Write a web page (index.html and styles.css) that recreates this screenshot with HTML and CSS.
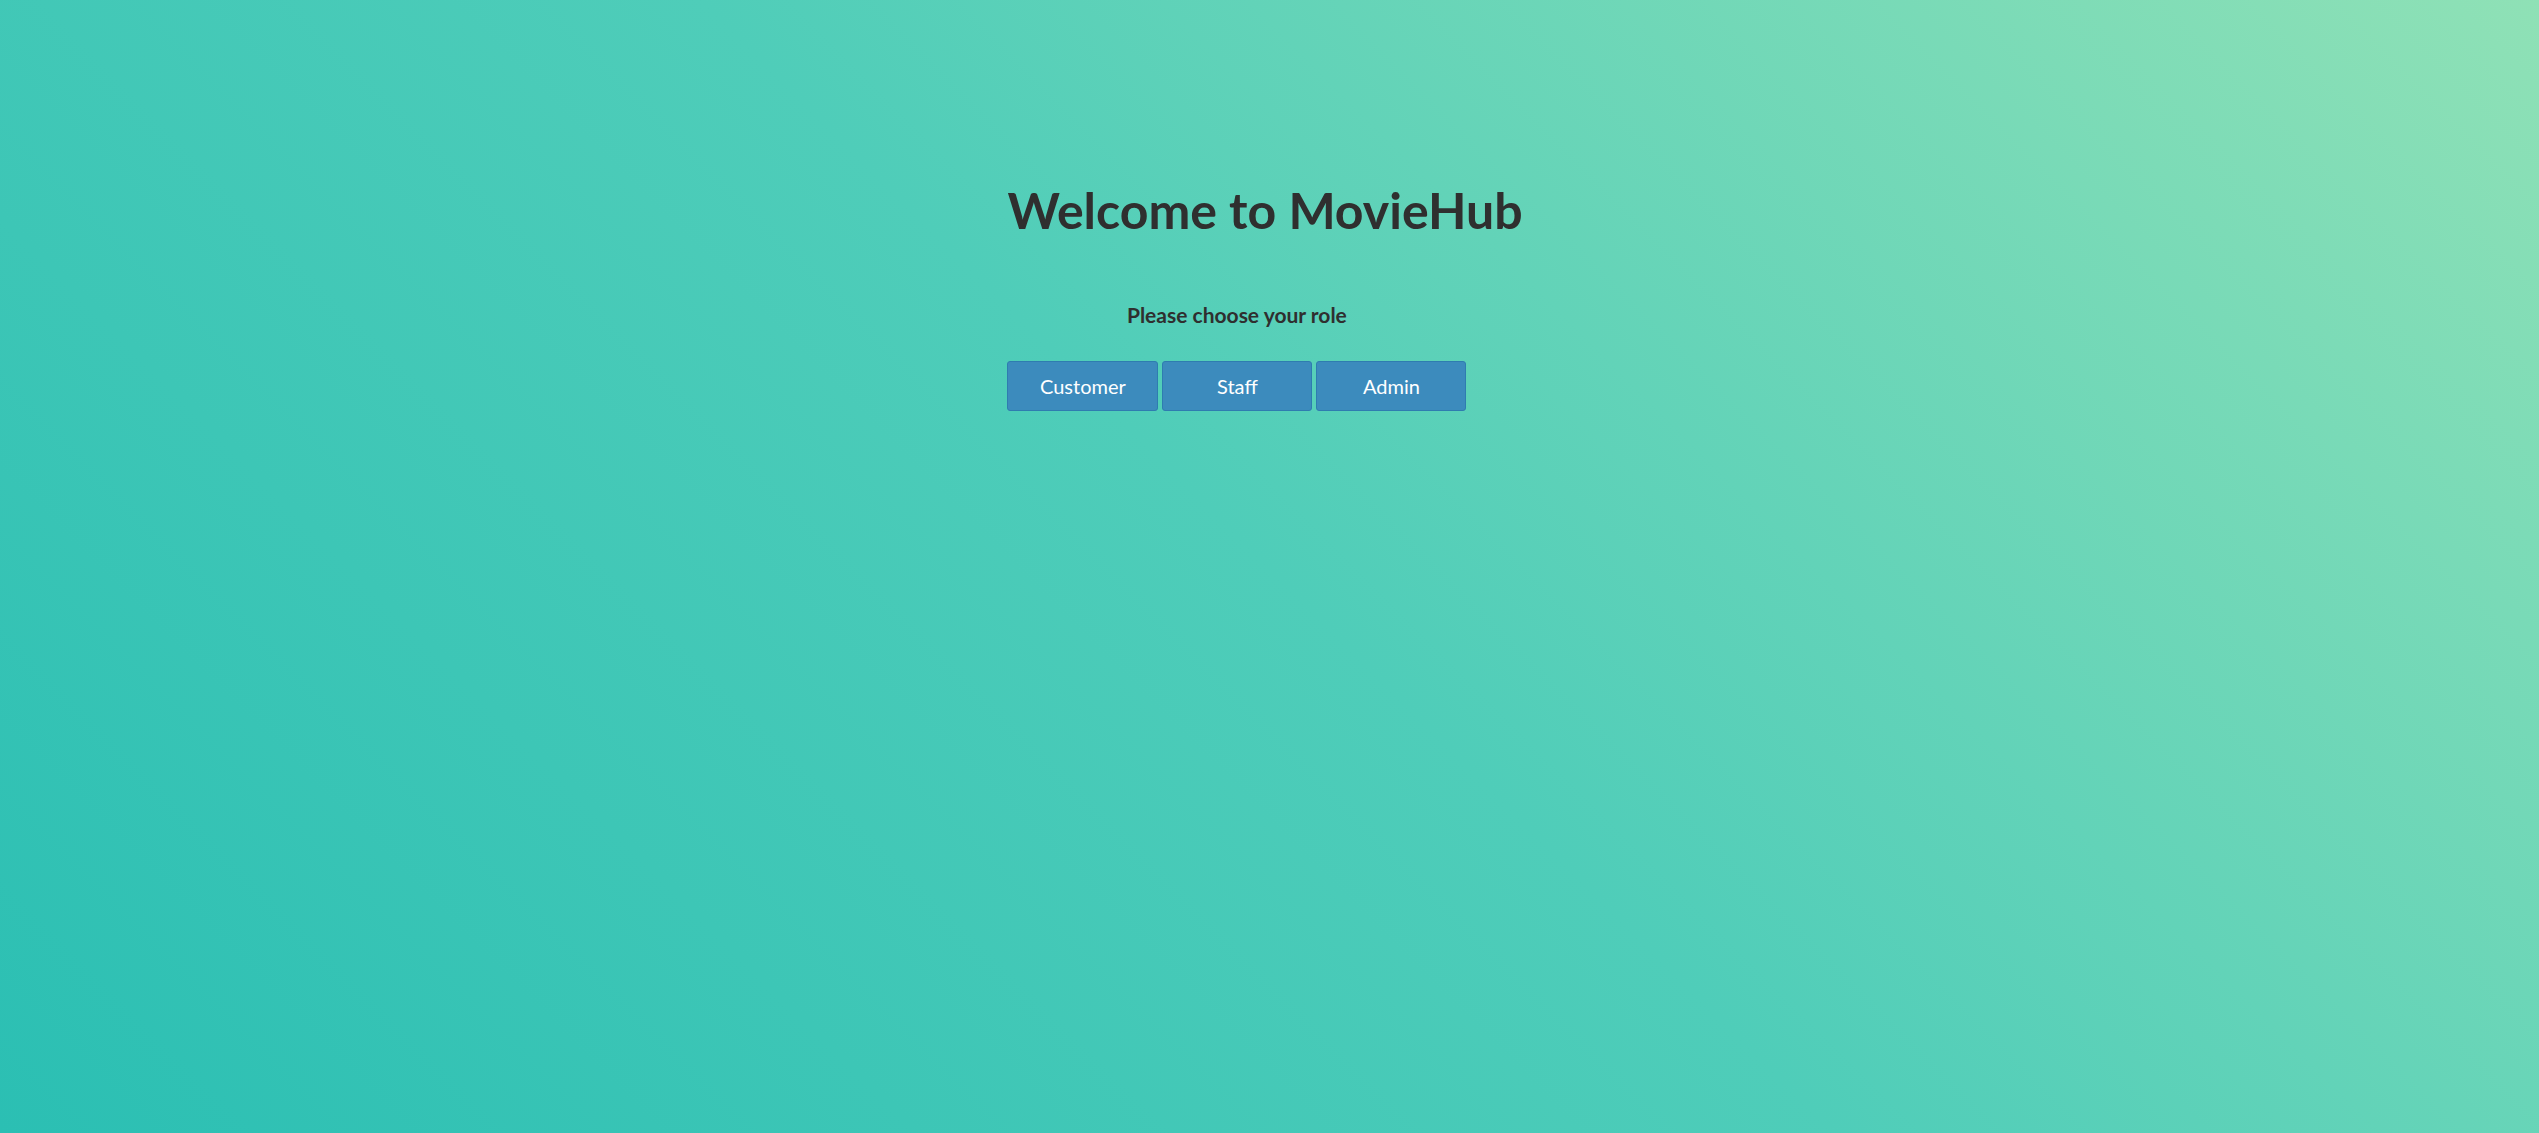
FILE: index.html
```html
<!DOCTYPE html>
<html lang="en">
<head>
<meta charset="utf-8">
<title>MovieHub</title>
<link rel="stylesheet" href="styles.css">
</head>
<body>
<main class="page">
  <div class="welcome">
    <h1 class="title">Welcome to MovieHub</h1>
    <div class="roles">
      <p class="prompt">Please choose your role</p>
      <div class="role-buttons">
        <button class="role-btn" type="button">Customer</button>
        <button class="role-btn" type="button">Staff</button>
        <button class="role-btn" type="button">Admin</button>
      </div>
    </div>
  </div>
</main>
</body>
</html>
```

FILE: styles.css
```css
html {
  height: 100%;
  background: linear-gradient(45deg, #2bbfb3 0%, #4fcdb9 50%, #8fe1b6 100%);
}

body {
  margin: 0;
  min-height: 100%;
  font-family: Lato, "Open Sans", sans-serif;
  color: #2f2f2f;
}

.page {
  display: flex;
  justify-content: center;
  padding-top: 180px;
  padding-right: 9px;
}

.welcome {
  display: flex;
  flex-direction: column;
  align-items: flex-start;
}

.title {
  margin: 0;
  font-size: 50px;
  line-height: 60px;
  font-weight: 700;
  white-space: nowrap;
}

.roles {
  display: flex;
  flex-direction: column;
  align-items: center;
  margin-top: 62px;
}

.prompt {
  margin: 0 0 34px;
  font-size: 21px;
  line-height: 25px;
  font-weight: 700;
}

.role-buttons {
  display: flex;
  gap: 4px;
}

.role-btn {
  width: 151px;
  height: 50px;
  padding: 0;
  font-family: Lato, "Open Sans", sans-serif;
  font-size: 20px;
  color: #ffffff;
  background: #3c8bbd;
  border: 1.5px solid #2f7cb0;
  border-radius: 3px;
}

.role-btn + .role-btn {
  width: 150px;
}
```
